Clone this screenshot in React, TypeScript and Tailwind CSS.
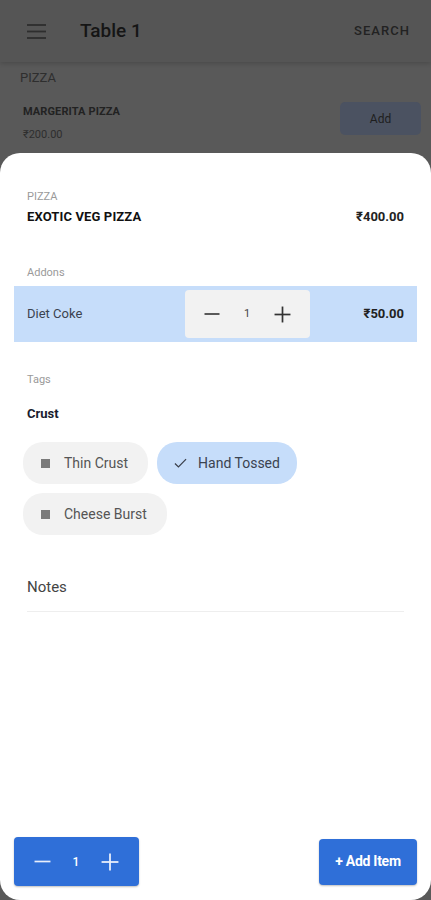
import React from "react";

const Minus = ({ color, w = 16 }: { color: string; w?: number }) => (
  <svg width={w} height={w} viewBox="0 0 16 16" fill="none">
    <line x1="0.5" y1="8" x2="15.5" y2="8" stroke={color} strokeWidth="1.6" />
  </svg>
);
const Plus = ({ color, w = 16 }: { color: string; w?: number }) => (
  <svg width={w} height={w} viewBox="0 0 16 16" fill="none">
    <line x1="0.5" y1="8" x2="15.5" y2="8" stroke={color} strokeWidth="1.6" />
    <line x1="8" y1="0.5" x2="8" y2="15.5" stroke={color} strokeWidth="1.6" />
  </svg>
);

function Chip({ label, selected }: { label: string; selected?: boolean }) {
  return (
    <div
      className={
        selected
          ? "h-[42px] flex items-center rounded-[20px] bg-[#c6ddfa] pl-[17px] pr-[17px] gap-[11px]"
          : "h-[42px] flex items-center rounded-[20px] bg-[#f2f2f2] pl-[18px] pr-[20px] gap-[14px]"
      }
    >
      {selected ? (
        <svg width="13" height="12" viewBox="0 0 14 12" fill="none">
          <path d="M1 6.5 L4.8 10.2 L13 1.8" stroke="#3a3f4a" strokeWidth="1.3" fill="none" />
        </svg>
      ) : (
        <div className="w-[9px] h-[9px] bg-[#7a7a7a]" />
      )}
      <span className={selected ? "text-[14px] text-[#3b4350]" : "text-[14px] text-[#555]"}>{label}</span>
    </div>
  );
}

export default function App() {
  return (
    <div className="relative h-[900px] w-full overflow-hidden bg-[#595959]" style={{ fontFamily: "Roboto, 'Noto Sans', sans-serif" }}>
      {/* Background app (dimmed) */}
      <div className="h-[62px] bg-[#555555] flex items-center px-[27px] shadow-[0_2px_4px_rgba(0,0,0,0.15)]">
        <svg width="19" height="15" viewBox="0 0 19 15" fill="none">
          <line x1="0" y1="1" x2="19" y2="1" stroke="#2e2e2e" strokeWidth="1.8" />
          <line x1="0" y1="7.5" x2="19" y2="7.5" stroke="#2e2e2e" strokeWidth="1.8" />
          <line x1="0" y1="14" x2="19" y2="14" stroke="#2e2e2e" strokeWidth="1.8" />
        </svg>
        <span className="ml-[34px] text-[19px] font-medium text-[#151515]">Table 1</span>
        <span className="ml-auto mr-[-6px] text-[13px] font-medium tracking-[0.08em] text-[#222]">SEARCH</span>
      </div>
      <div className="pl-[20px] pr-[10px] pt-[8px]">
        <div className="text-[13px] text-[#2e2e2e] leading-[16px]">PIZZA</div>
        <div className="flex items-start mt-[16px]">
          <div className="pl-[3px]">
            <div className="text-[11px] font-bold text-[#222] leading-[14px] pt-[3px] tracking-[0.01em]">MARGERITA PIZZA</div>
            <div className="text-[11px] text-[#2e2e2e] leading-[14px] mt-[9px]">₹200.00</div>
          </div>
          <div className="ml-auto w-[81px] h-[33px] rounded-[5px] bg-[#4b5261] flex items-center justify-center text-[12px] text-[#1e1e1e]">
            Add
          </div>
        </div>
      </div>

      {/* Bottom sheet */}
      <div className="absolute left-0 right-0 top-[153px] bottom-0 bg-white rounded-[20px] flex flex-col">
        <div className="px-[27px] pt-[37px]">
          <div className="text-[11px] leading-[14px] text-[#9a9a9a]">PIZZA</div>
          <div className="flex items-center mt-[4px]">
            <span className="text-[13px] leading-[18px] font-bold text-[#111] tracking-[0.01em]">EXOTIC VEG PIZZA</span>
            <span className="ml-auto text-[13px] leading-[18px] font-bold text-[#222]">₹400.00</span>
          </div>
          <div className="text-[11px] leading-[14px] text-[#9a9a9a] mt-[40px]">Addons</div>
        </div>
        <div className="mx-[14px] mt-[6px] h-[56px] bg-[#c6ddfa] flex items-center pl-[13px] pr-[13px]">
          <span className="text-[13px] text-[#3b4350] w-[158px]">Diet Coke</span>
          <div className="w-[125px] h-[48px] rounded-[4px] bg-[#f2f2f2] flex items-center justify-between px-[19px]">
            <Minus color="#333" />
            <span className="text-[11px] text-[#444]">1</span>
            <Plus color="#333" w={17} />
          </div>
          <span className="ml-auto text-[13px] font-bold text-[#222]">₹50.00</span>
        </div>
        <div className="px-[27px]">
          <div className="text-[11px] leading-[14px] text-[#9a9a9a] mt-[31px]">Tags</div>
          <div className="text-[13px] leading-[18px] font-bold text-[#1a1c2e] mt-[18px]">Crust</div>
        </div>
        <div className="px-[23px] mt-[19px] flex flex-wrap gap-[9px] w-[330px]">
          <Chip label="Thin Crust" />
          <Chip label="Hand Tossed" selected />
          <Chip label="Cheese Burst" />
        </div>
        <div className="px-[27px] mt-[42px]">
          <div className="text-[15px] leading-[20px] text-[#444]">Notes</div>
          <div className="mt-[14px] h-[1px] bg-[#eeeeee]" />
        </div>

        <div className="mt-auto flex items-center justify-between px-[14px] pb-[14px]">
          <div className="w-[125px] h-[49px] rounded-[4px] bg-[#2f6fd8] shadow-[0_1px_2px_rgba(0,0,0,0.25)] flex items-center justify-between px-[20px]">
            <Minus color="#e8eefb" w={17} />
            <span className="text-[12px] font-medium text-white">1</span>
            <Plus color="#e8eefb" w={18} />
          </div>
          <div className="w-[98px] h-[46px] rounded-[4px] bg-[#2f6fd8] shadow-[0_1px_2px_rgba(0,0,0,0.25)] flex items-center justify-center text-[14px] font-bold text-white tracking-[-0.02em]">
            + Add Item
          </div>
        </div>
      </div>
    </div>
  );
}
